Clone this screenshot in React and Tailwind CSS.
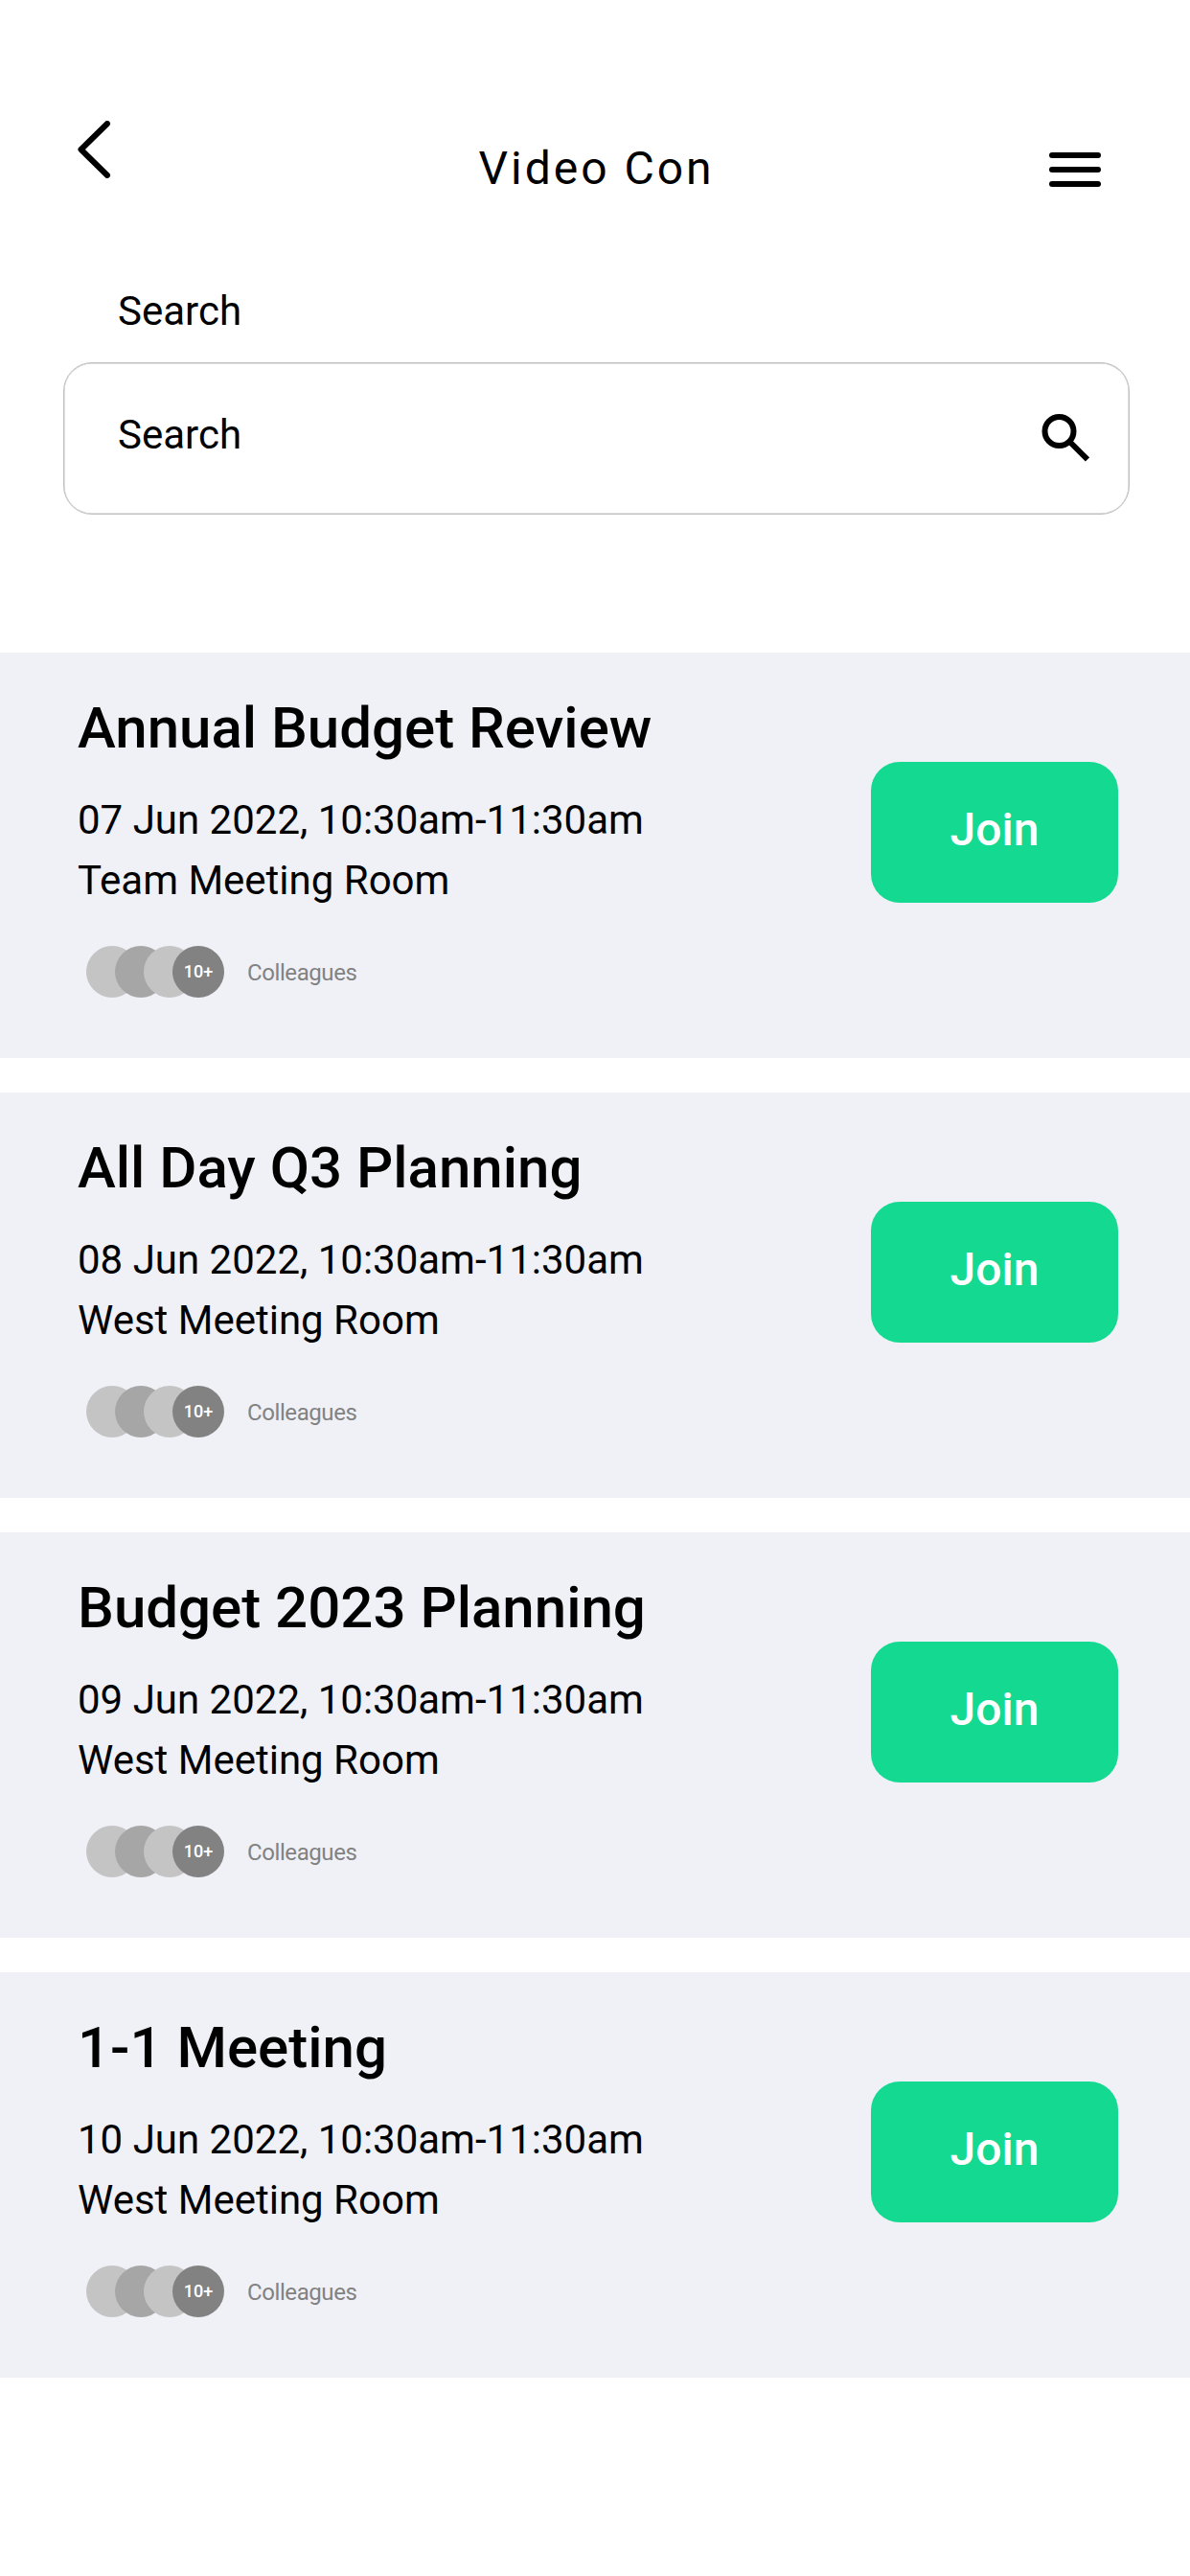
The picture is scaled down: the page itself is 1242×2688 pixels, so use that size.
const meetings = [
  { title: "Annual Budget Review", time: "07 Jun 2022, 10:30am-11:30am", room: "Team Meeting Room" },
  { title: "All Day Q3 Planning", time: "08 Jun 2022, 10:30am-11:30am", room: "West Meeting Room" },
  { title: "Budget 2023 Planning", time: "09 Jun 2022, 10:30am-11:30am", room: "West Meeting Room" },
  { title: "1-1 Meeting", time: "10 Jun 2022, 10:30am-11:30am", room: "West Meeting Room" },
];

function Avatars() {
  return (
    <div className="flex">
      <span className="size-[54px] rounded-full bg-[#c4c4c4]" />
      <span className="-ml-6 size-[54px] rounded-full bg-[#a6a6a6]" />
      <span className="-ml-6 size-[54px] rounded-full bg-[#c4c4c4]" />
      <span className="-ml-6 flex size-[54px] items-center justify-center rounded-full bg-[#828282] pb-px text-[18px] leading-[21px] font-medium text-white">
        10+
      </span>
    </div>
  );
}

function MeetingCard({ title, time, room }) {
  return (
    <article className="flex h-[423px] items-start justify-between bg-[#f0f1f7] pr-[75px] pl-[81px]">
      <div className="pt-[43px]">
        <h2 className="text-[60px] leading-[71px] font-medium">{title}</h2>
        <p className="mt-[29px] text-[42px] leading-[63px]">{time}</p>
        <p className="text-[42px] leading-[63px]">{room}</p>
        <div className="mt-[37px] ml-[9px] flex items-center">
          <Avatars />
          <span className="mt-0.5 ml-6 text-[24px] leading-7 tracking-[-0.41px] text-[#828282]">Colleagues</span>
        </div>
      </div>
      <button className="mt-[114px] flex h-[147px] w-[258px] justify-center rounded-[30px] bg-[#14d990] pt-[42px] text-[48px] leading-[57px] font-medium text-white">
        Join
      </button>
    </article>
  );
}

export default function App() {
  return (
    <div className="min-h-[2688px] w-[1242px] bg-white font-[Roboto,sans-serif] text-black">
      <header className="flex h-[293px] items-start justify-between pr-[93px] pl-[81px]">
        <svg className="mt-[126px] h-[60px] w-[54px]" viewBox="0 0 54 60" fill="none">
          <path d="M31 3L3.5 30L31 57" stroke="black" strokeWidth="6" strokeLinecap="round" strokeLinejoin="round" />
        </svg>
        <h1 className="mt-[147px] ml-[15px] text-[48px] leading-[57px] tracking-[3px]">Video Con</h1>
        <div className="mt-[159px] flex w-[54px] flex-col gap-[9px]">
          <span className="h-1.5 rounded-full bg-black" />
          <span className="h-1.5 rounded-full bg-black" />
          <span className="h-1.5 rounded-full bg-black" />
        </div>
      </header>
      <section className="px-[66px]">
        <label className="block h-[85px] pl-[57px] text-[42px] leading-[63px]">Search</label>
        <div className="flex h-[159px] w-[1113px] items-start justify-between rounded-[30px] border border-[#c0c0c0] pt-[43px] pr-[41px] pl-[56px] shadow-[inset_0_0_0_0.5px_#c0c0c0]">
          <span className="text-[42px] leading-[63px]">Search</span>
          <svg className="mt-[10px] size-[50px]" viewBox="0 0 50 50" fill="none">
            <circle cx="18.5" cy="18" r="15" stroke="black" strokeWidth="6" />
            <path d="M29 28.5L48 47.5" stroke="black" strokeWidth="6" />
          </svg>
        </div>
      </section>
      <main className="mt-36 flex flex-col gap-9">
        {meetings.map((m) => (
          <MeetingCard key={m.title} {...m} />
        ))}
      </main>
    </div>
  );
}
